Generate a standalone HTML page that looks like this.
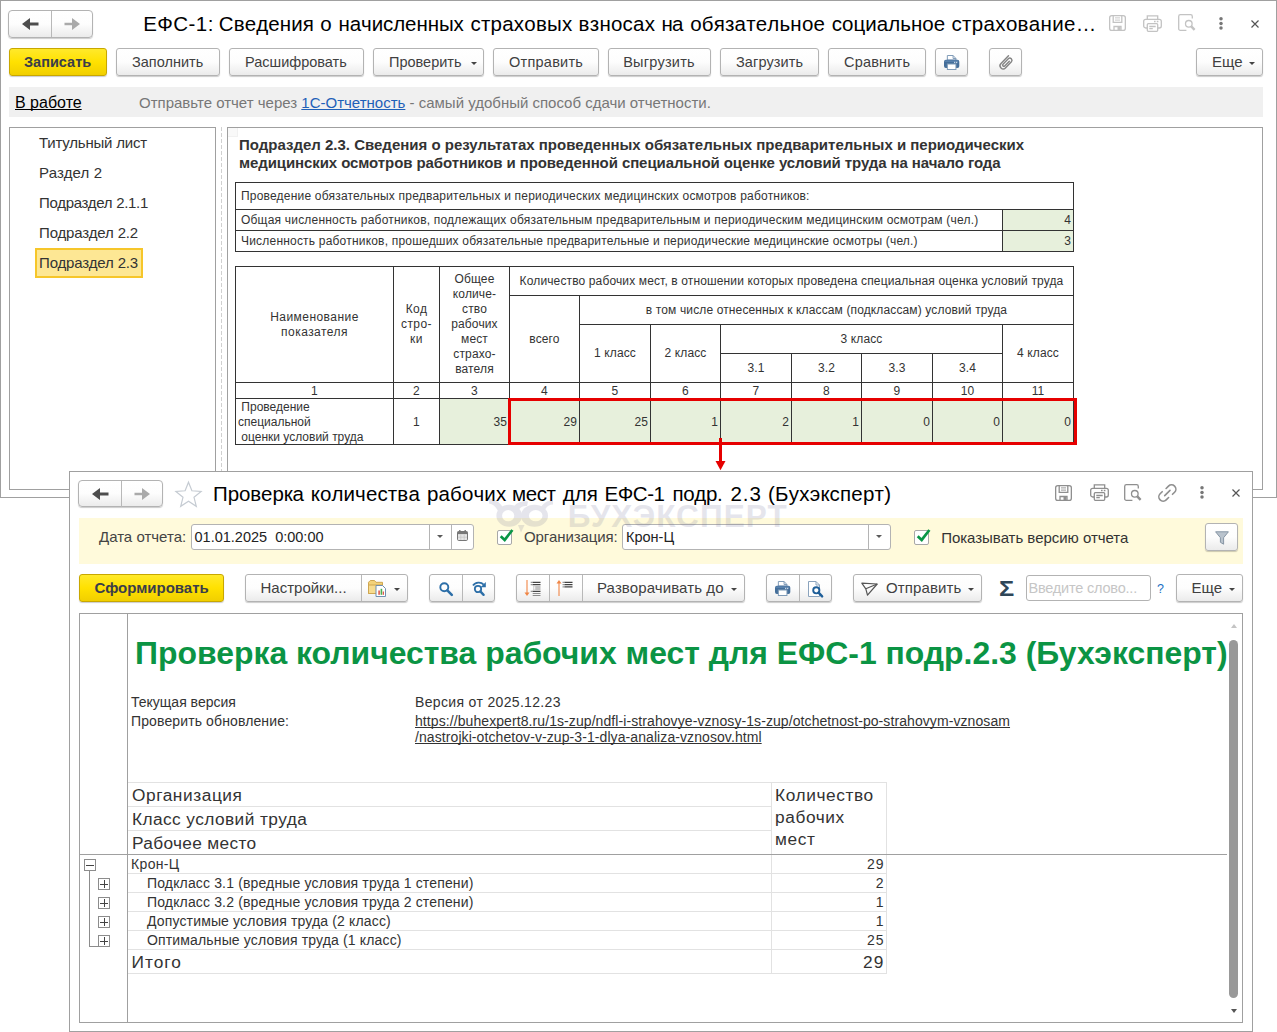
<!DOCTYPE html>
<html lang="ru"><head><meta charset="utf-8"><title>ЕФС-1</title>
<style>
*{box-sizing:border-box;margin:0;padding:0}
html,body{width:1277px;height:1032px;overflow:hidden;background:#fff}
body{font-family:"Liberation Sans",sans-serif;font-size:14px;color:#333;position:relative}
.abs,.t{position:absolute}
.t{white-space:nowrap}
.win{position:absolute;background:#fff;border:1px solid #a0a0a0}
.btn{position:absolute;height:28px;border:1px solid #b3b3b3;border-radius:3px;background:linear-gradient(#fff 0%,#fdfdfd 50%,#ebebeb 100%);box-shadow:0 1px 1px rgba(0,0,0,.2)}
.btn.y{background:linear-gradient(#ffe92b 0%,#ffe100 50%,#f1cf00 100%);border-color:#c8a700}
.bt{position:absolute;font-size:14.5px;line-height:18px;color:#404040;white-space:nowrap}
.bt.b{font-weight:bold;color:#3a3d4a}
.caret{position:absolute;width:0;height:0;border-left:3px solid transparent;border-right:3px solid transparent;border-top:3px solid #444}
.title{position:absolute;font-size:20.9px;color:#000;white-space:nowrap;line-height:24px;font-kerning:none}
.sep{position:absolute;top:0;width:1px;height:26px;background:#b8b8b8}
.mi{position:absolute;left:39px;font-size:15px;line-height:18px;color:#333;white-space:nowrap}
.c{position:absolute;border:1px solid #333;display:flex;align-items:center;justify-content:center;text-align:center;font-size:12px;line-height:15px;color:#333;white-space:nowrap;letter-spacing:.13px}
.c.l{justify-content:flex-start;text-align:left;padding-left:2px;letter-spacing:0;padding-top:1px}
.c.g{background:#e7f0dc}
.c.r{justify-content:flex-end;text-align:right;padding-right:2px}
.c.d{padding-top:1px}
.c.n{line-height:14px}
.t1{position:absolute;left:235px;width:839px;border:1px solid #333;font-size:12px;line-height:14px;color:#333;padding-left:5px;white-space:nowrap;letter-spacing:.2px}
.h1{position:absolute;left:239px;font-size:15px;font-weight:bold;line-height:18px;color:#333;white-space:nowrap}
.inp{position:absolute;height:26px;border:1px solid #b3b3b3;border-radius:3px;background:#fff}
.inp i{position:absolute;top:0;width:1px;height:24px;background:#b4b4b4}
.cb{position:absolute;width:15px;height:15px;border:1px solid #a8a8a8;border-radius:2px;background:#fff}
.rt{position:absolute;white-space:nowrap;color:#333}
.gl{position:absolute;background:#e2e2e2}
.tb{position:absolute;width:12px;height:12px;border:1px solid #8c8c8c;background:#fff}
.tb:before{content:"";position:absolute;left:1px;top:4.5px;width:8px;height:1px;background:#444}
.tb.p:after{content:"";position:absolute;left:4.5px;top:1px;width:1px;height:8px;background:#444}
svg{position:absolute;overflow:visible}
*{text-decoration-skip-ink:none}
</style></head><body>
<div class="win" style="left:0;top:0;width:1277px;height:498px"></div>
<div class="btn" style="left:8px;top:10px;width:85px;height:28px;border-radius:4px"><i class="sep" style="left:42px"></i><svg style="left:0;top:0" width="83" height="26" viewBox="0 0 83 26"><path d="M13 13l8-6v4.600h8.500v2.800H21v4.600z" fill="#4d4d4d"/><path d="M71 13l-8-6v4.700h-7.500v2.600H63v4.700z" fill="#aaa"/></svg></div>
<div class="title" style="left:0;top:11.500px;font-size:20.500px"><span style="position:absolute;left:143.22px;top:0px;letter-spacing:0.433px">ЕФС-1:</span><span style="position:absolute;left:218.76px;top:0px;letter-spacing:0.119px">Сведения</span><span style="position:absolute;left:320.14px;top:0px;letter-spacing:0.000px">о</span><span style="position:absolute;left:338.48px;top:0px;letter-spacing:-0.075px">начисленных</span><span style="position:absolute;left:470.43px;top:0px;letter-spacing:0.228px">страховых</span><span style="position:absolute;left:578.58px;top:0px;letter-spacing:0.255px">взносах</span><span style="position:absolute;left:661.58px;top:0px;letter-spacing:-1.001px">на</span><span style="position:absolute;left:690.14px;top:0px;letter-spacing:0.197px">обязательное</span><span style="position:absolute;left:831.63px;top:0px;letter-spacing:0.052px">социальное</span><span style="position:absolute;left:951.53px;top:0px;letter-spacing:0.336px">страхование…</span></div>
<svg style="left:1109px;top:15px" width="17" height="16" viewBox="0 0 17 16" fill="none" stroke="#c3c3c3" stroke-width="1.3"><rect x=".65" y=".65" width="15.7" height="14.7" rx="2.2"/><path d="M4.200 .7v6.600h8.600V.7"/><path d="M6 2.900h5M6 5.100h5" stroke-width=".9"/><path d="M5 15.300v-3.800h7v3.800" /><rect x="8.500" y="12" width="3" height="3.300" fill="#c3c3c3" stroke="none"/></svg>
<svg style="left:1143px;top:14.5px" width="19" height="17" viewBox="0 0 19 17" fill="none" stroke="#c3c3c3" stroke-width="1.3"><path d="M4.300 4.300V.8h10.400v3.500"/><rect x=".7" y="4.300" width="17.600" height="8.700" rx="2"/><rect x="4.300" y="8.700" width="10.400" height="7.600" rx="1" fill="#fff"/><path d="M6.300 11.500h6.400M6.300 13.700h3.500M11 6.500h1.600M13.800 6.500h1.600"/></svg>
<svg style="left:1178px;top:14px" width="18" height="18" viewBox="0 0 18 18" fill="none" stroke="#c3c3c3" stroke-width="1.3"><path d="M14.300 4.500V2.400a1.700 1.700 0 0 0-1.700-1.700H2.400A1.700 1.700 0 0 0 .7 2.400v12.300a1.700 1.700 0 0 0 1.700 1.700h6"/><circle cx="10.800" cy="9.800" r="3.300"/><path d="M13.300 12.400l3.300 3.400" stroke-width="2.400"/></svg>
<svg style="left:1218.5px;top:17px" width="4" height="13" viewBox="0 0 4 13" fill="#777"><circle cx="2" cy="1.800" r="1.750"/><circle cx="2" cy="6.400" r="1.750"/><circle cx="2" cy="11" r="1.750"/></svg>
<svg style="left:1251px;top:19.5px" width="8" height="8" viewBox="0 0 8 8" stroke="#555" stroke-width="1.2" fill="none"><path d="M.5 .5l7 7M7.500 .5l-7 7"/></svg>
<div class="btn y" style="left:9px;top:48px;width:98px"></div>
<div class="bt b" style="left:24px;top:53px">Записать</div>
<div class="btn " style="left:116px;top:48px;width:104px"></div>
<div class="bt" style="left:132px;top:53px">Заполнить</div>
<div class="btn " style="left:229px;top:48px;width:135px"></div>
<div class="bt" style="left:245px;top:53px">Расшифровать</div>
<div class="btn " style="left:373px;top:48px;width:111px"></div>
<div class="bt" style="left:389px;top:53px">Проверить</div>
<div class="caret" style="left:470.8px;top:61.5px;border-top-color:#444"></div>
<div class="btn " style="left:493px;top:48px;width:106px"></div>
<div class="bt" style="left:509px;top:53px;letter-spacing:0.25px">Отправить</div>
<div class="btn " style="left:608px;top:48px;width:103px"></div>
<div class="bt" style="left:623.2px;top:53px;letter-spacing:0.25px">Выгрузить</div>
<div class="btn " style="left:720px;top:48px;width:99px"></div>
<div class="bt" style="left:736px;top:53px;letter-spacing:0.1px">Загрузить</div>
<div class="btn " style="left:828px;top:48px;width:98px"></div>
<div class="bt" style="left:844px;top:53px;letter-spacing:0.2px">Сравнить</div>
<div class="btn " style="left:935px;top:48px;width:33px"></div>
<svg style="left:944px;top:55px" width="15.300" height="15" preserveAspectRatio="none" viewBox="0 0 16 15"><path d="M3.500 5V.5h6l3 3V5z" fill="#fff" stroke="#7f9bb7" stroke-width="1"/><path d="M9.500 .5v3h3" fill="none" stroke="#7f9bb7" stroke-width="1"/><rect x="0" y="4.700" width="16" height="8.300" rx="2" fill="#446e9a"/><rect x="1" y="5.600" width="14" height="1.200" rx=".6" fill="#5f88b3"/><rect x="3.500" y="9" width="9" height="5.500" fill="#fff" stroke="#7f9bb7" stroke-width="1"/><rect x="10.500" y="6.800" width="1.300" height="1.300" fill="#c9d8e8"/><rect x="12.600" y="6.800" width="1.300" height="1.300" fill="#c9d8e8"/></svg>
<div class="btn " style="left:989px;top:48px;width:33px"></div>
<svg style="left:999px;top:55px" width="14" height="15" viewBox="0 0 14 15" fill="none" stroke="#858585" stroke-width="1.450" stroke-linecap="round"><path d="M9.500 .8L2 8.600a3.100 3.100 0 0 0 4.400 4.400l6-6.200a2.200 2.200 0 0 0-3.100-3.100L4 9.200a1.200 1.200 0 0 0 1.700 1.700l4.600-4.700"/></svg>
<div class="btn " style="left:1196px;top:48px;width:67px"></div>
<div class="bt" style="left:1212px;top:53px;font-size:15px">Еще</div>
<div class="caret" style="left:1249px;top:61.5px;border-top-color:#444"></div>
<div class="abs" style="left:9px;top:87px;width:1254px;height:30px;background:#f0f0f0"></div>
<div class="t" style="left:15px;top:93px;font-size:16px;line-height:19px;color:#000;text-decoration:underline">В работе</div>
<div class="t" style="left:139px;top:94px;font-size:15px;line-height:18px;color:#777">Отправьте отчет через <span style="color:#1f60b8;text-decoration:underline">1С-Отчетность</span> - самый удобный способ сдачи отчетности.</div>
<div class="abs" style="left:9px;top:127px;width:207px;height:363px;border:1px solid #a0a0a0;background:#fff"></div>
<div class="abs" style="left:227px;top:127px;width:1036px;height:363px;border:1px solid #a0a0a0;background:#fff"></div>
<div class="abs" style="left:35px;top:248px;width:108px;height:30px;background:#fde794;border:2px solid #f6c62a"></div>
<div class="mi" style="top:133.5px;letter-spacing:-0.2px">Титульный лист</div>
<div class="mi" style="top:163.5px;letter-spacing:0.15px">Раздел 2</div>
<div class="mi" style="top:193.5px;letter-spacing:-0.3px">Подраздел 2.1.1</div>
<div class="mi" style="top:223.5px;letter-spacing:-0.15px">Подраздел 2.2</div>
<div class="mi" style="top:253.5px;letter-spacing:-0.15px">Подраздел 2.3</div>
<div class="abs" style="left:221px;top:127px;width:1px;height:363px;background:repeating-linear-gradient(to bottom,#d0d0d0 0,#d0d0d0 4px,transparent 4px,transparent 6px)"></div>
<div class="abs" style="left:228px;top:128px;width:10px;height:9px;background:#f9f9f9;border-right:1px solid #f1f1f1;border-bottom:1px solid #f1f1f1"></div>
<div class="h1" style="top:136px">Подраздел 2.3. Сведения о результатах проведенных обязательных предварительных и периодических</div>
<div class="h1" style="top:154px;letter-spacing:-.09px">медицинских осмотров работников и проведенной специальной оценке условий труда на начало года</div>
<div class="t1" style="top:182px;height:28px;line-height:26px">Проведение обязательных предварительных и периодических медицинских осмотров работников:</div>
<div class="t1" style="top:209px;height:22px;line-height:20px">Общая численность работников, подлежащих обязательным предварительным и периодическим медицинским осмотрам (чел.)</div>
<div class="t1" style="top:230px;height:22px;line-height:20px">Численность работников, прошедших обязательные предварительные и периодические медицинские осмотры (чел.)</div>
<div class="c g r" style="left:1002px;top:209px;width:72px;height:22px"><span>4</span></div>
<div class="c g r" style="left:1002px;top:230px;width:72px;height:22px"><span>3</span></div>
<div class="c " style="left:235px;top:266px;width:159px;height:117px;letter-spacing:.45px"><span>Наименование<br>показателя</span></div>
<div class="c " style="left:393px;top:266px;width:47px;height:117px;letter-spacing:.4px"><span>Код<br>стро-<br>ки</span></div>
<div class="c " style="left:439px;top:266px;width:71px;height:117px;"><span>Общее<br>количе-<br>ство<br>рабочих<br>мест<br>страхо-<br>вателя</span></div>
<div class="c " style="left:509px;top:266px;width:565px;height:30px;"><span>Количество рабочих мест, в отношении которых проведена специальная оценка условий труда</span></div>
<div class="c " style="left:509px;top:295px;width:71px;height:88px;"><span>всего</span></div>
<div class="c " style="left:579px;top:295px;width:495px;height:30px;"><span>в том числе отнесенных к классам (подклассам) условий труда</span></div>
<div class="c " style="left:579px;top:324px;width:72px;height:59px;"><span>1 класс</span></div>
<div class="c " style="left:650px;top:324px;width:71px;height:59px;"><span>2 класс</span></div>
<div class="c " style="left:720px;top:324px;width:283px;height:30px;"><span>3 класс</span></div>
<div class="c " style="left:1002px;top:324px;width:72px;height:59px;"><span>4 класс</span></div>
<div class="c " style="left:720px;top:353px;width:72px;height:30px;"><span>3.1</span></div>
<div class="c " style="left:791px;top:353px;width:71px;height:30px;"><span>3.2</span></div>
<div class="c " style="left:861px;top:353px;width:72px;height:30px;"><span>3.3</span></div>
<div class="c " style="left:932px;top:353px;width:71px;height:30px;"><span>3.4</span></div>
<div class="c n" style="left:235px;top:382px;width:159px;height:17px;"><span>1</span></div>
<div class="c n" style="left:393px;top:382px;width:47px;height:17px;"><span>2</span></div>
<div class="c n" style="left:439px;top:382px;width:71px;height:17px;"><span>3</span></div>
<div class="c n" style="left:509px;top:382px;width:71px;height:17px;"><span>4</span></div>
<div class="c n" style="left:579px;top:382px;width:72px;height:17px;"><span>5</span></div>
<div class="c n" style="left:650px;top:382px;width:71px;height:17px;"><span>6</span></div>
<div class="c n" style="left:720px;top:382px;width:72px;height:17px;"><span>7</span></div>
<div class="c n" style="left:791px;top:382px;width:71px;height:17px;"><span>8</span></div>
<div class="c n" style="left:861px;top:382px;width:72px;height:17px;"><span>9</span></div>
<div class="c n" style="left:932px;top:382px;width:71px;height:17px;"><span>10</span></div>
<div class="c n" style="left:1002px;top:382px;width:72px;height:17px;"><span>11</span></div>
<div class="c l" style="left:235px;top:398px;width:159px;height:47px;"><span>&nbsp;Проведение<br>специальной<br>&nbsp;оценки условий труда</span></div>
<div class="c d" style="left:393px;top:398px;width:47px;height:47px;"><span>1</span></div>
<div class="c g r d" style="left:439px;top:398px;width:71px;height:47px;"><span>35</span></div>
<div class="c g r d" style="left:509px;top:398px;width:71px;height:47px;"><span>29</span></div>
<div class="c g r d" style="left:579px;top:398px;width:72px;height:47px;"><span>25</span></div>
<div class="c g r d" style="left:650px;top:398px;width:71px;height:47px;"><span>1</span></div>
<div class="c g r d" style="left:720px;top:398px;width:72px;height:47px;"><span>2</span></div>
<div class="c g r d" style="left:791px;top:398px;width:71px;height:47px;"><span>1</span></div>
<div class="c g r d" style="left:861px;top:398px;width:72px;height:47px;"><span>0</span></div>
<div class="c g r d" style="left:932px;top:398px;width:71px;height:47px;"><span>0</span></div>
<div class="c g r d" style="left:1002px;top:398px;width:72px;height:47px;"><span>0</span></div>
<div class="abs" style="left:508px;top:398px;width:569px;height:47px;border:3px solid #e60000"></div>
<svg style="left:710px;top:436px" width="22" height="36" viewBox="0 0 22 36"><rect x="9" y="2" width="3" height="24" fill="#e60000"/><path d="M5.500 25H15.500L10.500 34.300Z" fill="#e60000"/></svg>
<div class="win" style="left:69px;top:471px;width:1184px;height:561px"></div>
<div class="btn" style="left:78px;top:480px;width:85px;height:27px;border-radius:4px"><i class="sep" style="left:42px"></i><svg style="left:0;top:0" width="83" height="26" viewBox="0 0 83 26"><path d="M13 13l8-6v4.600h8.500v2.800H21v4.600z" fill="#4d4d4d"/><path d="M71 13l-8-6v4.700h-7.500v2.600H63v4.700z" fill="#aaa"/></svg></div>
<svg style="left:174px;top:480px" width="29" height="28" viewBox="0 0 29 28"><path d="M14.500 2.200l3.400 8.600 9.200 .6-7.100 5.900 2.300 9-7.800-5-7.800 5 2.300-9-7.100-5.900 9.200-.6z" fill="#fff" stroke="#c5cbd2" stroke-width="1.200"/></svg>
<div class="title" style="left:0;top:482px;font-size:20.500px"><span style="position:absolute;left:213.04px;top:0px;letter-spacing:-0.091px">Проверка</span><span style="position:absolute;left:310.82px;top:0px;letter-spacing:0.132px">количества</span><span style="position:absolute;left:426.88px;top:0px;letter-spacing:0.169px">рабочих</span><span style="position:absolute;left:512.08px;top:0px;letter-spacing:-0.454px">мест</span><span style="position:absolute;left:562.80px;top:0px;letter-spacing:-0.001px">для</span><span style="position:absolute;left:604.62px;top:0px;letter-spacing:-0.502px">ЕФС-1</span><span style="position:absolute;left:672.38px;top:0px;letter-spacing:-0.317px">подр.</span><span style="position:absolute;left:730.47px;top:0px;letter-spacing:0.967px">2.3</span><span style="position:absolute;left:768.03px;top:0px;letter-spacing:0.224px">(Бухэксперт)</span></div>
<svg style="left:1055px;top:485px" width="17" height="16" viewBox="0 0 17 16" fill="none" stroke="#8f8f8f" stroke-width="1.3"><rect x=".65" y=".65" width="15.7" height="14.7" rx="2.2"/><path d="M4.200 .7v6.600h8.600V.7"/><path d="M6 2.900h5M6 5.100h5" stroke-width=".9"/><path d="M5 15.300v-3.800h7v3.800" /><rect x="8.500" y="12" width="3" height="3.300" fill="#8f8f8f" stroke="none"/></svg>
<svg style="left:1089.5px;top:484.2px" width="19" height="17" viewBox="0 0 19 17" fill="none" stroke="#8f8f8f" stroke-width="1.3"><path d="M4.300 4.300V.8h10.400v3.500"/><rect x=".7" y="4.300" width="17.600" height="8.700" rx="2"/><rect x="4.300" y="8.700" width="10.400" height="7.600" rx="1" fill="#fff"/><path d="M6.300 11.500h6.400M6.300 13.700h3.500M11 6.500h1.600M13.800 6.500h1.600"/></svg>
<svg style="left:1124px;top:484px" width="18" height="18" viewBox="0 0 18 18" fill="none" stroke="#8f8f8f" stroke-width="1.3"><path d="M14.300 4.500V2.400a1.700 1.700 0 0 0-1.700-1.700H2.400A1.700 1.700 0 0 0 .7 2.400v12.300a1.700 1.700 0 0 0 1.700 1.700h6"/><circle cx="10.800" cy="9.800" r="3.300"/><path d="M13.300 12.400l3.300 3.400" stroke-width="2.400"/></svg>
<svg style="left:1158px;top:484px" width="19" height="18" viewBox="0 0 19 18" fill="none" stroke="#8f8f8f" stroke-width="1.600" stroke-linecap="round"><path d="M8.100 4.500L10.490 2.110A4.310 4.310 0 0 1 16.590 8.210L14.500 10.300"/><path d="M10.600 13.500L8.210 15.890A4.310 4.310 0 0 1 2.110 9.790L4.200 7.700"/><path d="M6.700 11.600L12 6.400"/></svg>
<svg style="left:1199.5px;top:486.3px" width="4" height="13" viewBox="0 0 4 13" fill="#777"><circle cx="2" cy="1.800" r="1.750"/><circle cx="2" cy="6.400" r="1.750"/><circle cx="2" cy="11" r="1.750"/></svg>
<svg style="left:1231.5px;top:489.4px" width="8" height="8" viewBox="0 0 8 8" stroke="#555" stroke-width="1.2" fill="none"><path d="M.5 .5l7 7M7.500 .5l-7 7"/></svg>
<div class="abs" style="left:79px;top:518px;width:1164px;height:46px;background:#fffadb"></div>
<div class="t" style="left:99px;top:528px;font-size:15px;line-height:18px;color:#444">Дата отчета:</div>
<div class="inp" style="left:191px;top:524px;width:283px"><i style="left:237px"></i><i style="left:259px"></i></div>
<div class="t" style="left:194.5px;top:528px;font-size:14.5px;line-height:18px;color:#222">01.01.2025&nbsp; 0:00:00</div>
<div class="caret" style="left:437px;top:535px;border-top-color:#5a5a5a"></div>
<svg style="left:456.5px;top:530.3px" width="11" height="11" viewBox="0 0 11 11"><rect x=".5" y="1.500" width="10" height="9" rx="1.200" fill="#e6e6e6" stroke="#777" stroke-width="1"/><rect x=".5" y="1.500" width="10" height="2.600" fill="#777"/><path d="M2.800 0v2M8.200 0v2" stroke="#777" stroke-width="1.400"/><path d="M3.800 4.500v5.500M7.200 4.500v5.500M1 7.200h9" stroke="#c4c4c4" stroke-width=".7"/></svg>
<div class="cb" style="left:497px;top:530px"></div>
<svg style="left:497px;top:529px" width="16" height="16" viewBox="0 0 16 16" fill="none"><path d="M3.700 7.200L7.700 10.900L15.400 1" stroke="#0a9646" stroke-width="2.700"/></svg>
<div class="t" style="left:524px;top:528px;font-size:15px;line-height:18px;color:#444;letter-spacing:-0.08px">Организация:</div>
<div class="inp" style="left:622px;top:524px;width:269px"><i style="left:245px"></i></div>
<div class="t" style="left:626px;top:528px;font-size:14.5px;line-height:18px;color:#222">Крон-Ц</div>
<div class="caret" style="left:876px;top:535px;border-top-color:#5a5a5a"></div>
<div class="cb" style="left:914px;top:530px"></div>
<svg style="left:914px;top:529px" width="16" height="16" viewBox="0 0 16 16" fill="none"><path d="M3.700 7.200L7.700 10.900L15.400 1" stroke="#0a9646" stroke-width="2.700"/></svg>
<div class="t" style="left:941.2px;top:529px;font-size:15px;line-height:18px;color:#333;letter-spacing:-0.03px">Показывать версию отчета</div>
<div class="btn " style="left:1205px;top:523px;width:33px"></div>
<svg style="left:1214.5px;top:530.5px" width="14" height="14" viewBox="0 0 14 14"><path d="M.6 .8h12.800L8.600 6.700v6.500L5.400 11.300V6.700z" fill="#b9c3cd" stroke="#8796a5" stroke-width="1" stroke-linejoin="round"/></svg>
<svg style="left:489px;top:497px;opacity:.16" width="70" height="40" viewBox="0 0 70 40" fill="#64648c"><g><path d="M7.399999999999999 18.65A12.8 11 0 1 1 33.0 18.65A12.8 11 0 1 1 7.399999999999999 18.65ZM13.049999999999999 18.65A6.1 5.65 0 1 0 25.25 18.65A6.1 5.65 0 1 0 13.049999999999999 18.65Z"/><path d="M32.0 18.65A13.5 11 0 1 1 59.0 18.65A13.5 11 0 1 1 32.0 18.65ZM39.900000000000006 18.65A6.8 5.65 0 1 0 53.5 18.65A6.8 5.65 0 1 0 39.900000000000006 18.65Z"/><path d="M0 1.500C6 2 11 5.500 14 10.500l-5 3.500C7 10 4 7 0 6.500z"/><path d="M24 11C27 5.500 33 3.500 39 4.500l-1 4.500C34 8.500 31 10 29 14z"/><path d="M52 10C55 5.500 59 3.500 64 3.500v4C60.500 7.500 58 9 56.500 12z"/><path d="M29 28l3 7.500 3.500-7.500z"/></g></svg>
<div class="t" style="left:567.700px;top:499.100px;font-weight:bold;font-size:31.500px;line-height:34px;letter-spacing:1.100px;color:#64648c;opacity:.16">БУХЭКСПЕРТ</div>
<div class="btn y" style="left:79px;top:574px;width:145px"></div>
<div class="bt b" style="left:94.5px;top:579px;font-size:15px">Сформировать</div>
<div class="btn " style="left:245px;top:574px;width:163px"><i class="sep" style="left:115px"></i></div>
<div class="bt" style="left:260.5px;top:579px;font-size:15px">Настройки...</div>
<svg style="left:367.5px;top:580px" width="18" height="17" viewBox="0 0 18 17"><path d="M.5 13.500V2.300l1.800-1.800h4.200l1.500 1.800h6.500v11.200z" fill="#f3d27a" stroke="#cfa650" stroke-width="1"/><path d="M.5 5h14v8.500H.5z" fill="#f7dc8f" stroke="#cfa650" stroke-width="1"/><path d="M8 5.500h6.500l3 3V16.500H8z" fill="#fff" stroke="#6f8fb0" stroke-width="1"/><rect x="10.300" y="10.500" width="1.600" height="4.300" fill="#e05a4a"/><rect x="12.600" y="8.800" width="1.600" height="6" fill="#4caf50"/><rect x="14.700" y="11.500" width="1.300" height="3.300" fill="#e05a4a"/></svg>
<div class="caret" style="left:394.3px;top:587.5px;border-top-color:#444"></div>
<div class="btn " style="left:429px;top:574px;width:66px"><i class="sep" style="left:32px"></i></div>
<svg style="left:439px;top:581.5px" width="14" height="14" viewBox="0 0 14 14" fill="none" stroke="#2d6fa8"><circle cx="5.300" cy="5.300" r="4" stroke-width="1.900"/><path d="M8.300 8.300l4.500 4.500" stroke-width="2.600" stroke-linecap="round"/></svg>
<svg style="left:471.5px;top:580.5px" width="15" height="15" viewBox="0 0 15 15" fill="none" stroke="#2d6fa8"><circle cx="6" cy="8" r="3.200" stroke-width="1.800"/><path d="M8.300 10.400l3.300 3.400" stroke-width="2.400" stroke-linecap="round"/><path d="M1 4.600C3.500 .8 9 .6 11.700 3.600" stroke-width="1.800"/><path d="M13.800 1v5.200H8.600z" fill="#2d6fa8" stroke="none"/></svg>
<div class="btn " style="left:516px;top:574px;width:229px"><i class="sep" style="left:32px"></i><i class="sep" style="left:65px"></i></div>
<svg style="left:523.5px;top:580px" width="17" height="16" viewBox="0 0 17 16"><path d="M3 0v13.500" stroke="#f08545" stroke-width="1.100"/><path d="M.5 12.600h5L3 16z" fill="#f08545"/><path d="M6.700 2.400h2M6.700 4.600h2M6.700 11.300h2" stroke="#999" stroke-width="1.200"/><path d="M8.700 2.400h7.800M8.700 4.600h7.800M8.700 11.300h7.800" stroke="#444" stroke-width="1.300"/><rect x="9" y="5.800" width="7.500" height="4.400" fill="#c2c2c2"/><rect x="9.500" y="6.300" width="1.800" height="3.400" fill="#eee"/><path d="M8.700 13.500h7.800M8.700 15.500h7.800" stroke="#8c8c8c" stroke-width="1"/></svg>
<svg style="left:555.5px;top:580px" width="17" height="16" viewBox="0 0 17 16"><path d="M3 3v13" stroke="#f08545" stroke-width="1.100"/><path d="M.5 3.400h5L3 0z" fill="#f08545"/><path d="M6.500 2.400h2M6.500 4.600h2M6.500 6.800h2" stroke="#999" stroke-width="1.200"/><path d="M8.500 2.400h8M8.500 4.600h8M8.500 6.800h8" stroke="#444" stroke-width="1.300"/></svg>
<div class="bt" style="left:597px;top:579px;letter-spacing:0.1px;font-size:15px">Разворачивать до</div>
<div class="caret" style="left:730.6px;top:587.5px;border-top-color:#444"></div>
<div class="btn " style="left:766px;top:574px;width:66px"><i class="sep" style="left:32px"></i></div>
<svg style="left:774.5px;top:581px" width="15.300" height="15" preserveAspectRatio="none" viewBox="0 0 16 15"><path d="M3.500 5V.5h6l3 3V5z" fill="#fff" stroke="#7f9bb7" stroke-width="1"/><path d="M9.500 .5v3h3" fill="none" stroke="#7f9bb7" stroke-width="1"/><rect x="0" y="4.700" width="16" height="8.300" rx="2" fill="#446e9a"/><rect x="1" y="5.600" width="14" height="1.200" rx=".6" fill="#5f88b3"/><rect x="3.500" y="9" width="9" height="5.500" fill="#fff" stroke="#7f9bb7" stroke-width="1"/><rect x="10.500" y="6.800" width="1.300" height="1.300" fill="#c9d8e8"/><rect x="12.600" y="6.800" width="1.300" height="1.300" fill="#c9d8e8"/></svg>
<svg style="left:808px;top:580.5px" width="16" height="17" viewBox="0 0 16 17"><path d="M.5 .5h7.500l3.500 3.500V15.500H.5z" fill="#fff" stroke="#8aa3bd" stroke-width="1"/><path d="M8 .5v3.500h3.500" fill="none" stroke="#8aa3bd" stroke-width="1"/><circle cx="8.300" cy="9.300" r="3.100" fill="#fff" stroke="#1f5f99" stroke-width="1.900"/><path d="M10.600 11.700l3.500 3.600" stroke="#1f5f99" stroke-width="2.500" stroke-linecap="round"/></svg>
<div class="btn " style="left:853px;top:574px;width:129px"></div>
<svg style="left:861px;top:582px" width="17" height="14" viewBox="0 0 17 14" fill="none" stroke="#555" stroke-width="1.200" stroke-linejoin="round"><path d="M.8 1.200l15.400 .8-9.700 11.200-1.700-6.400z"/><path d="M4.800 6.800L16.200 2"/></svg>
<div class="bt" style="left:886px;top:579px;letter-spacing:0.12px;font-size:15px">Отправить</div>
<div class="caret" style="left:968.3px;top:587.5px;border-top-color:#444"></div>
<div class="t" style="left:999.3px;top:577px;font-size:21.5px;line-height:24px;color:#2f4658;font-weight:bold;transform:scaleX(1.18);transform-origin:0 0">Σ</div>
<div class="inp" style="left:1026px;top:575px;width:125px"></div>
<div class="t" style="left:1028.5px;top:579px;font-size:14.5px;line-height:18px;color:#c6c6c6;letter-spacing:-0.2px">Введите слово...</div>
<div class="t" style="left:1157px;top:580px;font-size:12.5px;line-height:18px;color:#1a6fc4">?</div>
<div class="btn " style="left:1176px;top:574px;width:67px"></div>
<div class="bt" style="left:1191.5px;top:579px;font-size:15px">Еще</div>
<div class="caret" style="left:1229.4px;top:587.5px;border-top-color:#444"></div>
<div class="abs" style="left:79px;top:613px;width:1164px;height:410px;border:1px solid #a0a0a0;background:#fff"></div>
<div class="abs" style="left:127px;top:614px;width:1px;height:408px;background:#a0a0a0"></div>
<div class="t" style="left:135.1px;top:634.1px;font-size:31.92px;line-height:38px;color:#0b9444;font-weight:bold">Проверка количества рабочих мест для ЕФС-1 подр.2.3 (Бухэксперт)</div>
<div class="t" style="left:131px;top:694px;font-size:14px;line-height:16px;color:#333">Текущая версия</div>
<div class="t" style="left:131px;top:713px;font-size:14px;line-height:16px;color:#333;letter-spacing:0.12px">Проверить обновление:</div>
<div class="t" style="left:415px;top:694px;font-size:14px;line-height:16px;color:#333;letter-spacing:0.34px">Версия от 2025.12.23</div>
<div class="t" style="left:415px;top:713px;font-size:14px;line-height:16px;color:#333;letter-spacing:0.083px;text-decoration:underline">https://buhexpert8.ru/1s-zup/ndfl-i-strahovye-vznosy-1s-zup/otchetnost-po-strahovym-vznosam<br>/nastrojki-otchetov-v-zup-3-1-dlya-analiza-vznosov.html</div>
<div class="gl" style="left:128px;top:782px;width:759px;height:1px"></div>
<div class="gl" style="left:128px;top:806px;width:644px;height:1px"></div>
<div class="gl" style="left:128px;top:830px;width:644px;height:1px"></div>
<div class="gl" style="left:771px;top:782px;width:1px;height:192px"></div>
<div class="gl" style="left:886px;top:782px;width:1px;height:192px"></div>
<div class="gl" style="left:128px;top:873px;width:759px;height:1px"></div>
<div class="gl" style="left:128px;top:892px;width:759px;height:1px"></div>
<div class="gl" style="left:128px;top:911px;width:759px;height:1px"></div>
<div class="gl" style="left:128px;top:930px;width:759px;height:1px"></div>
<div class="gl" style="left:128px;top:949px;width:759px;height:1px"></div>
<div class="gl" style="left:128px;top:973px;width:759px;height:1px"></div>
<div class="gl" style="left:80px;top:854px;width:1147px;height:1px;background:#a0a0a0"></div>
<div class="t" style="left:132px;top:785px;font-size:17.3px;line-height:20px;color:#333;letter-spacing:0.57px">Организация</div>
<div class="t" style="left:132px;top:809px;font-size:17.3px;line-height:20px;color:#333;letter-spacing:0.42px">Класс условий труда</div>
<div class="t" style="left:132px;top:833px;font-size:17.3px;line-height:20px;color:#333;letter-spacing:0.33px">Рабочее место</div>
<div class="t" style="left:775px;top:784px;font-size:17.3px;line-height:22px;color:#333;letter-spacing:0.6px">Количество<br>рабочих<br>мест</div>
<div class="t" style="left:131px;top:856px;font-size:14px;line-height:16px;color:#333;letter-spacing:0.35px">Крон-Ц</div>
<div class="t" style="left:147px;top:875px;font-size:14px;line-height:16px;color:#333;letter-spacing:0.15px">Подкласс 3.1 (вредные условия труда 1 степени)</div>
<div class="t" style="left:147px;top:894px;font-size:14px;line-height:16px;color:#333;letter-spacing:0.15px">Подкласс 3.2 (вредные условия труда 2 степени)</div>
<div class="t" style="left:147px;top:913px;font-size:14px;line-height:16px;color:#333;letter-spacing:0.15px">Допустимые условия труда (2 класс)</div>
<div class="t" style="left:147px;top:932px;font-size:14px;line-height:16px;color:#333;letter-spacing:0.15px">Оптимальные условия труда (1 класс)</div>
<div class="t" style="left:131.5px;top:952px;font-size:17.3px;line-height:20px;color:#333;letter-spacing:1px">Итого</div>
<div class="t" style="left:773.3px;width:111px;text-align:right;top:856px;font-size:14px;line-height:16px;letter-spacing:0.8px">29</div>
<div class="t" style="left:772.5px;width:111px;text-align:right;top:875px;font-size:14px;line-height:16px;letter-spacing:0px">2</div>
<div class="t" style="left:772.5px;width:111px;text-align:right;top:894px;font-size:14px;line-height:16px;letter-spacing:0px">1</div>
<div class="t" style="left:772.5px;width:111px;text-align:right;top:913px;font-size:14px;line-height:16px;letter-spacing:0px">1</div>
<div class="t" style="left:773.3px;width:111px;text-align:right;top:932px;font-size:14px;line-height:16px;letter-spacing:0.8px">25</div>
<div class="t" style="left:773.500px;width:111px;text-align:right;top:952px;font-size:17.300px;line-height:20px;letter-spacing:1.200px">29</div>
<div class="abs" style="left:89px;top:871px;width:1px;height:76px;background:#8c8c8c"></div>
<div class="abs" style="left:89px;top:946px;width:21px;height:1px;background:#8c8c8c"></div>
<div class="tb" style="left:84px;top:859px"></div>
<div class="tb p" style="left:98px;top:878px"></div>
<div class="tb p" style="left:98px;top:897px"></div>
<div class="tb p" style="left:98px;top:916px"></div>
<div class="tb p" style="left:98px;top:935px"></div>
<div class="abs" style="left:1229px;top:640px;width:9px;height:358px;border-radius:4.5px;background:#999"></div>
<div class="abs" style="left:1231px;top:624px;width:0;height:0;border-left:3px solid transparent;border-right:3px solid transparent;border-bottom:4px solid #c4c4c4"></div>
<div class="abs" style="left:1231px;top:1009px;width:0;height:0;border-left:3px solid transparent;border-right:3px solid transparent;border-top:4px solid #555"></div>
</body></html>
